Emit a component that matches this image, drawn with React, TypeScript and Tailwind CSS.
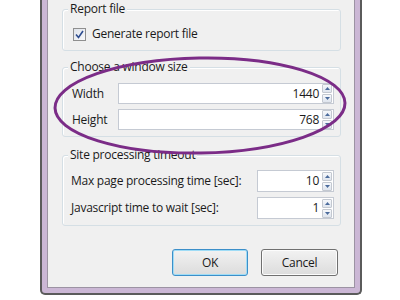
import React from "react";

const font = { fontFamily: '"Open Sans", "Noto Sans", sans-serif', letterSpacing: "-0.25px" };

function Spinner() {
  return (
    <div className="flex flex-col gap-[1px] w-[10px] self-center">
      <div className="h-[9px] border border-[#c3c8d0] rounded-[1px] bg-gradient-to-b from-[#f6f8fb] to-[#dfe5ee] flex items-center justify-center">
        <svg width="5" height="3" viewBox="0 0 5 3"><path d="M0 3 L2.5 0 L5 3 Z" fill="#4b6b9c" /></svg>
      </div>
      <div className="h-[9px] border border-[#c3c8d0] rounded-[1px] bg-gradient-to-b from-[#f6f8fb] to-[#dfe5ee] flex items-center justify-center">
        <svg width="5" height="3" viewBox="0 0 5 3"><path d="M0 0 L2.5 3 L5 0 Z" fill="#4b6b9c" /></svg>
      </div>
    </div>
  );
}

function NumInput({ value, w, h }: { value: string; w: string; h: string }) {
  return (
    <div className={`${w} ${h} flex border border-[#c5cad3] bg-white pr-[1px]`}>
      <div className="flex-1 flex items-center justify-end pr-[3px] text-[12px] text-[#1a1a1a]">{value}</div>
      <Spinner />
    </div>
  );
}

function GroupLabel({ children }: { children: React.ReactNode }) {
  return (
    <div className="-mt-[9px] ml-[5px] px-[2px] w-fit bg-[#f0f0f0] leading-4 text-[12px] text-[#1a1a1a]">
      {children}
    </div>
  );
}

export default function App() {
  return (
    <div className="relative w-[400px] h-[300px] bg-white overflow-hidden" style={font}>
      <div className="ml-[40px] w-[322px] h-[295px] border-x-2 border-b-2 border-[#5b5b5b] rounded-b-[5px] bg-[#cbb7d5]">
        <div className="mx-[5px] h-[288px] border-x border-b border-[#9c93a3] bg-[#f0f0f0] flex flex-col">
          {/* Report file */}
          <div className="mt-[9px] ml-[14px] w-[279px] border border-[#d5dfe5] rounded-[3px] shadow-[inset_1px_1px_0_#fff] pb-[9px]">
            <GroupLabel>Report file</GroupLabel>
            <div className="mt-[10px] ml-[10px] h-[14px] flex items-center gap-[6px]">
              <div className="w-[13px] h-[13px] border border-[#8f8f8f] bg-gradient-to-br from-[#dfe3ea] to-[#f7f8fa] flex items-center justify-center">
                <svg width="9" height="9" viewBox="0 0 9 9">
                  <path d="M1 4.5 L3.5 7.5 L8 1" stroke="#2d4c8f" strokeWidth="1.6" fill="none" />
                </svg>
              </div>
              <span className="text-[12px] leading-4 text-[#1a1a1a]">Generate report file</span>
            </div>
          </div>

          {/* Window size */}
          <div className="mt-[16px] ml-[14px] w-[279px] border border-[#d5dfe5] rounded-[3px] shadow-[inset_1px_1px_0_#fff] pb-[6px]">
            <GroupLabel>Choose a window size</GroupLabel>
            <div className="mt-[8px] flex flex-col gap-[5px] pl-[9px] pr-[6px]">
              <div className="flex items-center">
                <span className="w-[46px] text-[12px] text-[#1a1a1a]">Width</span>
                <NumInput value="1440" w="flex-1" h="h-[21px]" />
              </div>
              <div className="flex items-center">
                <span className="w-[46px] text-[12px] text-[#1a1a1a]">Height</span>
                <NumInput value="768" w="flex-1" h="h-[21px]" />
              </div>
            </div>
          </div>

          {/* Timeout */}
          <div className="mt-[18px] ml-[14px] w-[279px] border border-[#d5dfe5] rounded-[3px] shadow-[inset_1px_1px_0_#fff] pb-[6px]">
            <GroupLabel>Site processing timeout</GroupLabel>
            <div className="mt-[7px] flex flex-col gap-[5px] pl-[8px] pr-[6px]">
              <div className="flex items-center justify-between">
                <span className="text-[12px] text-[#1a1a1a]">Max page processing time [sec]:</span>
                <NumInput value="10" w="w-[77px]" h="h-[22px]" />
              </div>
              <div className="flex items-center justify-between">
                <span className="text-[12px] text-[#1a1a1a]">Javascript time to wait [sec]:</span>
                <NumInput value="1" w="w-[77px]" h="h-[22px]" />
              </div>
            </div>
          </div>

          {/* Buttons */}
          <div className="mt-[23px] flex justify-end gap-[13px] pr-[16px]">
            <div className="w-[76px] h-[27px] rounded-[3px] border border-[#3c8fc9] shadow-[inset_0_0_0_1px_#9fdcf6] bg-gradient-to-b from-[#f2f2f2] to-[#dcdcdc] flex items-center justify-center text-[12px] text-[#1a1a1a]">
              OK
            </div>
            <div className="w-[77px] h-[27px] rounded-[3px] border border-[#707070] shadow-[inset_0_0_0_1px_#fcfcfc] bg-gradient-to-b from-[#f2f2f2] to-[#dcdcdc] flex items-center justify-center text-[12px] text-[#1a1a1a]">
              Cancel
            </div>
          </div>
        </div>
      </div>

      <svg className="absolute left-0 top-0 pointer-events-none" width="400" height="300" viewBox="0 0 400 300">
        <ellipse cx="200" cy="105.5" rx="145" ry="47.5" transform="rotate(-1 200 105)" fill="none" stroke="#7b2c87" strokeWidth="3" />
      </svg>
    </div>
  );
}
